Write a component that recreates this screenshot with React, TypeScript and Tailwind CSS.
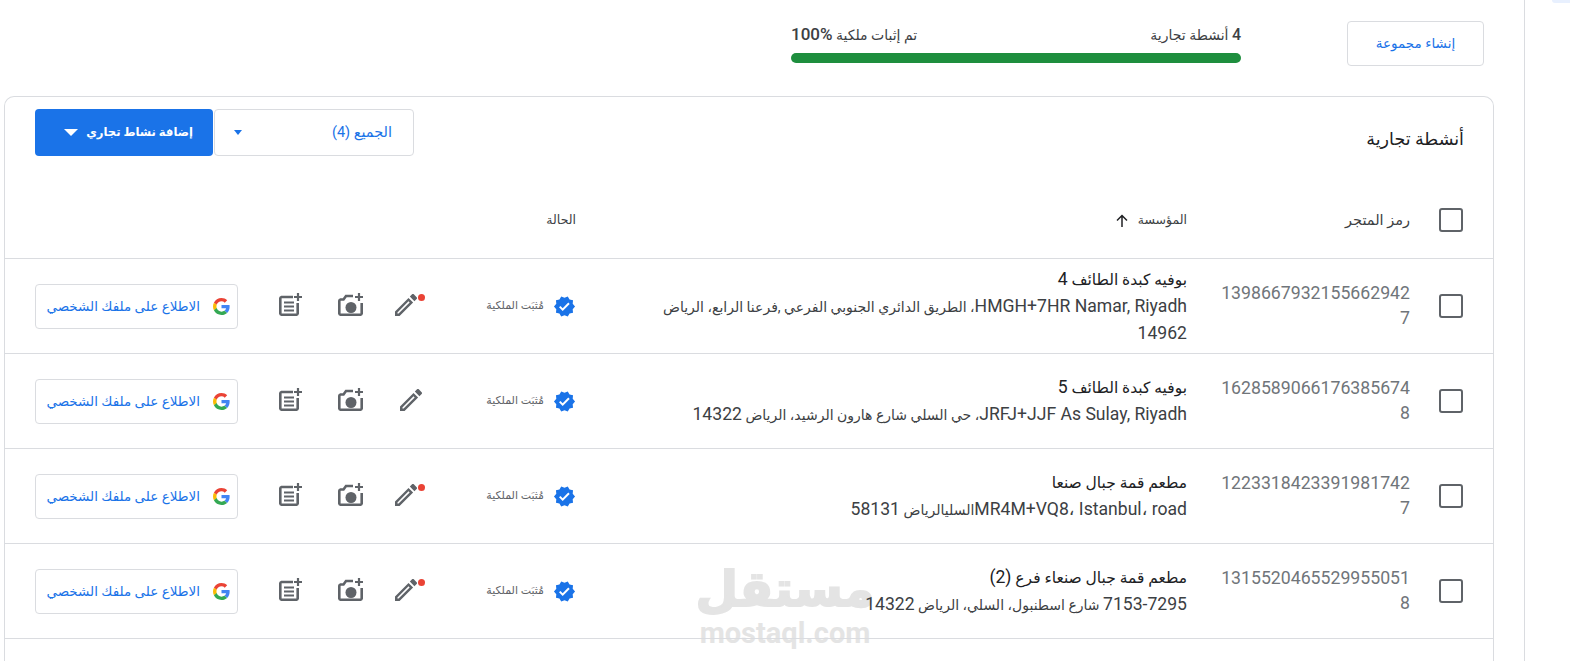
import React from "react";

const rows = [
  {
    code: "13986679321556629427",
    name: [["بوفيه كبدة الطائف "], ["4", 1]],
    addr: [["HMGH+7HR Namar, Riyadh", 1], ["، الطريق الدائري الجنوبي الفرعي ,فرعنا الرابع، الرياض "], ["14962", 1]],
    dot: true,
  },
  {
    code: "16285890661763856748",
    name: [["بوفيه كبدة الطائف "], ["5", 1]],
    addr: [["JRFJ+JJF As Sulay, Riyadh", 1], ["، حي السلي شارع هارون الرشيد، الرياض "], ["14322", 1]],
    dot: false,
  },
  {
    code: "12233184233919817427",
    name: [["مطعم قمة جبال صنعا"]],
    addr: [["MR4M+VQ8، Istanbul، road", 1], ["السليالرياض "], ["58131", 1]],
    dot: true,
  },
  {
    code: "13155204655299550518",
    name: [["مطعم قمة جبال صنعاء فرع "], ["(2)", 1]],
    addr: [["7153-7295", 1], [" شارع اسطنبول، السلي، الرياض "], ["14322", 1]],
    dot: true,
  },
] as { code: string; name: (string | number)[][]; addr: (string | number)[][]; dot: boolean }[];

function Mixed({ parts }: { parts: (string | number)[][] }) {
  return (
    <>
      {parts.map((p, i) =>
        p[1] ? (
          <span key={i} className="text-[17.6px]">{p[0]}</span>
        ) : (
          <React.Fragment key={i}>{p[0]}</React.Fragment>
        )
      )}
    </>
  );
}

function Check() {
  return <span className="block h-6 w-6 shrink-0 rounded-[3px] border-2 border-[#5f6368]" />;
}

function Pencil() {
  return (
    <svg width="22" height="22" viewBox="3 3 18 18" fill="#5f6368">
      <path d="M3 17.25V21h3.75L17.81 9.94l-3.75-3.75L3 17.25zM5.92 19H5v-.92l9.06-9.06.92.92L5.92 19zM20.71 5.63l-2.34-2.34c-.2-.2-.45-.29-.71-.29s-.51.1-.7.29l-1.83 1.83 3.75 3.75 1.83-1.83c.39-.39.39-1.02 0-1.41z" />
    </svg>
  );
}

function PhotoAdd() {
  return (
    <svg width="26" height="24" viewBox="0 0 26 24" fill="none" stroke="#5f6368" strokeWidth="2.6">
      <path d="M15 3H8L5.5 6.5H2.5A1.5 1.5 0 0 0 1.3 8V20.5A1.5 1.5 0 0 0 2.5 21.7H22.5A1.5 1.5 0 0 0 23.7 20.5V10" />
      <circle cx="13" cy="14.5" r="5.5" fill="#5f6368" stroke="none" />
      <path d="M21 0V8M17 4H25" strokeWidth="2.2" />
    </svg>
  );
}

function PostAdd() {
  return (
    <svg width="24" height="24" viewBox="0 0 24 24" fill="none" stroke="#5f6368" strokeWidth="2.6">
      <path d="M14 4H2.5A1.5 1.5 0 0 0 1.3 5.5V20.5A1.5 1.5 0 0 0 2.5 21.7H17.5A1.5 1.5 0 0 0 18.7 20.5V10" />
      <path d="M5 9.5H15M5 13.5H15M5 17.5H15" strokeWidth="2.2" />
      <path d="M19 0V8M15 4H23" strokeWidth="2.2" />
    </svg>
  );
}

function Verified() {
  return (
    <svg width="23" height="23" viewBox="0 0 24 24" fill="#1a73e8" className="shrink-0">
      <path d="M23 12l-2.44-2.79.34-3.69-3.61-.82-1.89-3.2L12 2.96 8.6 1.5 6.71 4.69 3.1 5.5l.34 3.7L1 12l2.44 2.79-.34 3.7 3.61.82L8.6 22.5l3.4-1.47 3.4 1.46 1.89-3.19 3.61-.82-.34-3.69L23 12zm-12.91 4.72l-3.8-3.81 1.48-1.48 2.32 2.33 5.85-5.87 1.48 1.48-7.33 7.35z" />
    </svg>
  );
}

function GLogo() {
  return (
    <svg width="17" height="17" viewBox="0 0 48 48" className="shrink-0">
      <path fill="#EA4335" d="M24 9.5c3.54 0 6.71 1.22 9.21 3.6l6.85-6.85C35.9 2.38 30.47 0 24 0 14.62 0 6.51 5.38 2.56 13.22l7.98 6.19C12.43 13.72 17.74 9.5 24 9.5z" />
      <path fill="#4285F4" d="M46.98 24.55c0-1.57-.15-3.09-.38-4.55H24v9.02h12.94c-.58 2.96-2.26 5.48-4.78 7.18l7.73 6c4.51-4.18 7.09-10.36 7.09-17.65z" />
      <path fill="#FBBC05" d="M10.53 28.59c-.48-1.45-.76-2.99-.76-4.59s.27-3.14.76-4.59l-7.98-6.19C.92 16.46 0 20.12 0 24c0 3.88.92 7.54 2.56 10.78l7.97-6.19z" />
      <path fill="#34A853" d="M24 48c6.48 0 11.93-2.13 15.89-5.81l-7.73-6c-2.15 1.45-4.92 2.3-8.16 2.3-6.26 0-11.57-4.22-13.47-9.91l-7.98 6.19C6.51 42.62 14.62 48 24 48z" />
    </svg>
  );
}

export default function App() {
  return (
    <div className="relative flex h-[661px] w-[1570px] overflow-hidden bg-white font-['Roboto','Liberation_Sans','DejaVu_Sans',sans-serif] text-[#202124]">
      <main dir="rtl" className="relative z-10 flex w-[1525px] shrink-0 flex-col border-r border-[#dadce0] pr-[30px] pl-[4px]">
        <header className="flex h-[96px] shrink-0 items-start pt-[21px] pr-[10px]">
          <button className="h-[45px] w-[137px] rounded-[4px] border border-[#dadce0] text-[13.5px] text-[#1a73e8]">إنشاء مجموعة</button>
          <div className="mr-[106px] w-[450px] pt-[4px]">
            <div className="flex h-[20px] items-center justify-between text-[14px] text-[#3c4043]">
              <span><b className="text-[16px] font-medium">4</b> أنشطة تجارية</span>
              <span>تم إثبات ملكية <bdi dir="ltr" className="text-[17px] font-medium">100%</bdi></span>
            </div>
            <div className="mt-[8px] h-[10px] rounded-full bg-[#1e8e3e]" />
          </div>
        </header>

        <section className="flex-1 rounded-t-[10px] border border-b-0 border-[#dadce0]">
          <div className="flex h-[59px] items-start justify-between pt-[12px] pr-[29px] pl-[30px]">
            <h2 className="pt-[17px] text-[17.5px] font-normal">أنشطة تجارية</h2>
            <div className="flex gap-[1px]">
              <button className="flex h-[47px] w-[200px] items-center justify-between rounded-[4px] border border-[#dadce0] pr-[21px] pl-[19px] text-[14.5px] text-[#1a73e8]">
                <span>الجميع (4)</span>
                <span className="block h-0 w-0 border-x-[4px] border-t-[5px] border-x-transparent border-t-[#1a73e8]" />
              </button>
              <button className="flex h-[47px] w-[178px] items-center gap-[8px] rounded-[4px] bg-[#1a73e8] pr-[20px] text-[11.6px] font-bold text-white">
                <span>إضافة نشاط تجاري</span>
                <span className="block h-0 w-0 border-x-[7px] border-t-[7px] border-x-transparent border-t-white" />
              </button>
            </div>
          </div>

          <div className="flex h-[103px] items-center border-b border-[#dadce0] pt-[25px] pr-[30px] text-[12.5px] text-[#3c4043]">
            <Check />
            <span className="mr-[29px] mt-[2px] w-[193px] text-[14.5px]">رمز المتجر</span>
            <span className="mr-[30px] mt-[2px] flex w-[535px] items-center gap-[8px]">
              المؤسسة
              <svg width="16" height="16" viewBox="0 0 16 16" fill="none" stroke="#202124" strokeWidth="1.5"><path d="M8 14V2.5M3 7.5l5-5 5 5" /></svg>
            </span>
            <span className="mr-[76px] mt-[2px]">الحالة</span>
          </div>

          {rows.map((r) => (
            <div key={r.code} className="flex h-[95px] items-center border-b border-[#dadce0] pr-[30px] pl-[30px]">
              <Check />
              <div className="mr-[29px] w-[193px] break-all text-[17.7px] leading-[25px] text-[#70757a]">{r.code}</div>
              <div className="mr-[30px] w-[535px]">
                <div className="text-[15.5px] leading-[26px]"><Mixed parts={r.name} /></div>
                <div className="text-[14px] leading-[26px] text-[#3c4043]"><Mixed parts={r.addr} /></div>
              </div>
              <div className="mr-[76px] flex w-[100px] items-center gap-[9px] text-[11px] text-[#5f6368]">
                <Verified />
                <span>مُثبَت الملكية</span>
              </div>
              <div className={"relative mb-[3px] mr-[54px] flex h-[22px] w-[27px] " + (r.dot ? "justify-end" : "justify-start")}>
                <Pencil />
                {r.dot && <span className="absolute top-0 right-[-3px] h-[7px] w-[7px] rounded-full bg-[#ea4335]" />}
              </div>
              <div className="mb-[3px] mr-[31px] h-[24px]"><PhotoAdd /></div>
              <div className="mb-[3px] mr-[35px] h-[24px]"><PostAdd /></div>
              <button className="mr-auto flex h-[45px] w-[203px] items-center gap-[13px] rounded-[4px] border border-[#dadce0] pr-[7px] text-[13.5px] text-[#1a73e8]">
                <GLogo />
                <span>الاطلاع على ملفك الشخصي</span>
              </button>
            </div>
          ))}
        </section>
      </main>

      <div className="absolute top-0 right-0 h-[3px] w-[18px] rounded-bl-[10px] bg-[#e8f0fe]" />

      <div dir="rtl" className="pointer-events-none absolute left-[697px] top-[560px] flex w-[176px] flex-col items-center text-[#e4e4e4]">
        <span className="text-[49px] leading-[60px] font-bold [-webkit-text-stroke:2px_#e4e4e4]">مستقل</span>
        <span dir="ltr" className="text-[29px] leading-[26px] font-bold">mostaql.com</span>
      </div>
    </div>
  );
}
